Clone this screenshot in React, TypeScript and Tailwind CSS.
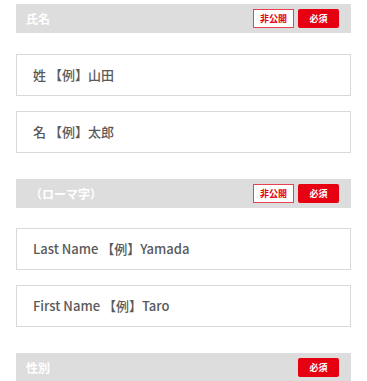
import React from 'react';

const font = { fontFamily: '"Noto Sans CJK JP", "Noto Sans", sans-serif' };

const SectionHeader = ({ title, privateBadge, indent }: { title: string; privateBadge?: boolean; indent?: boolean }) => (
  <div className="flex h-[29px] items-center justify-between bg-[#dddddd] pl-[10px] pr-[12px]">
    <span className={`text-[12px] font-bold leading-none text-white ${indent ? 'ml-[4px]' : ''}`}>{title}</span>
    <div className="flex gap-[4px]">
      {privateBadge && (
        <span className="flex h-[19px] w-[41px] items-center justify-center border border-[#e8414f] bg-white text-[9px] font-bold text-[#e60012]">
          非公開
        </span>
      )}
      <span className="flex h-[19px] w-[41px] items-center justify-center rounded-[2px] bg-[#e60012] text-[9px] font-bold text-white">
        必須
      </span>
    </div>
  </div>
);

const Field = ({ placeholder }: { placeholder: string }) => (
  <div className="flex h-[42px] items-center border border-[#d9d9d9] bg-white px-[16px]">
    <span className="text-[13px] font-medium text-[#5a5a5a]">{placeholder}</span>
  </div>
);

export default function App() {
  return (
    <div className="min-h-screen bg-white px-[16px] pt-[4px]" style={font}>
      <SectionHeader title="氏名" privateBadge />
      <div className="mt-[21px] flex flex-col gap-[15px]">
        <Field placeholder="姓 【例】山田" />
        <Field placeholder="名 【例】太郎" />
      </div>
      <div className="mt-[26px]">
        <SectionHeader title="（ローマ字）" privateBadge indent />
      </div>
      <div className="mt-[20px] flex flex-col gap-[15px]">
        <Field placeholder="Last Name 【例】Yamada" />
        <Field placeholder="First Name 【例】Taro" />
      </div>
      <div className="mt-[26px]">
        <SectionHeader title="性別" />
      </div>
    </div>
  );
}
